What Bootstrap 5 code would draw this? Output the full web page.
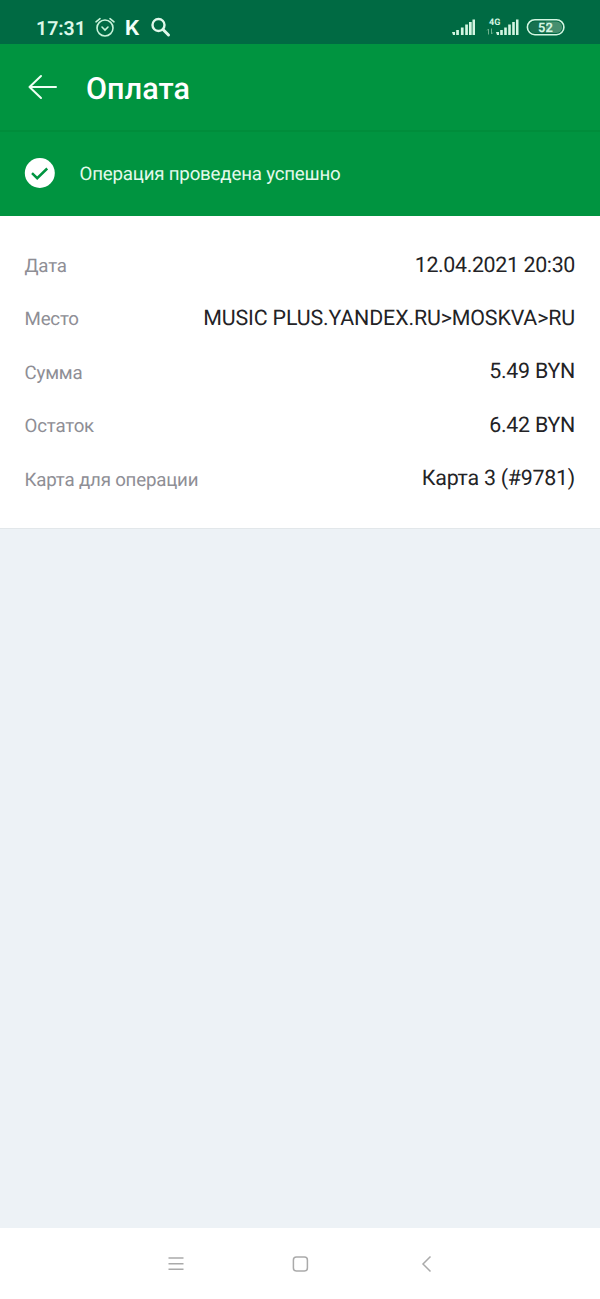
<!DOCTYPE html>
<html lang="ru">
<head>
<meta charset="utf-8">
<meta name="viewport" content="width=device-width, initial-scale=1">
<title>Оплата</title>
<link href="https://cdn.jsdelivr.net/npm/bootstrap@5.3.0/dist/css/bootstrap.min.css" rel="stylesheet">
<style>
body{font-family:Roboto,"Noto Sans",sans-serif;background:#edf2f6;height:1299px;overflow:hidden;text-rendering:geometricPrecision}
svg{display:block;flex:none}
.status{height:44px;background:#006a43;color:#dcf8e8;padding:11px 35px 0 36px}
.clock{font-size:19.5px;font-weight:600;line-height:35px;width:58px;height:33px}
.k-app{font:700 20.5px/34px Inter,sans-serif;width:26px;color:#f2fff8}
.app-title{height:88px;background:#009440;border-bottom:2px solid #008d3b;color:#fff;padding-left:27px}
.app-title h1{font-size:30.5px;font-weight:500;line-height:36px;margin:6px 0 0 28px;letter-spacing:.1px}
.result{height:84px;background:#009440;color:#e4faec;padding-left:24px;font-size:18.7px;letter-spacing:-.19px}
.result-text{margin-left:23.5px}
.details{height:313px;background:#fff;border-bottom:1px solid #e2e7ea;padding:23.5px 25px 0 24.5px}
.detail-row{height:53.35px}
.detail-row dt{font-size:18.7px;font-weight:400;color:#8e8e95;letter-spacing:-.19px}
.detail-row dd{font-size:21.4px;color:#232326;margin-top:-1px;letter-spacing:-.25px}
.detail-row .stamp{letter-spacing:-.36px}
.detail-row .place{letter-spacing:-.14px}
.sysnav{height:71px;background:#fff}
</style>
</head>
<body class="d-flex flex-column">
<header>
  <div class="status d-flex align-items-start justify-content-between">
    <div class="d-flex">
      <span class="clock">17:31</span>
      <svg width="31" height="33" viewBox="0 0 31 33" fill="none" stroke="#c8f4da" stroke-width="1.6" stroke-linecap="round"><circle cx="11" cy="17" r="8"/><path d="M2 10.8 6 7.7M20 10.8 16 7.7M8 16l3 3 3-3"/></svg>
      <span class="k-app">K</span>
      <svg width="22" height="33" viewBox="0 0 22 33" fill="none" stroke="#e0f8ea" stroke-width="2.4" stroke-linecap="round"><circle cx="7.5" cy="14" r="6"/><path d="m12 18.5 5.5 5.5" stroke-width="3"/></svg>
    </div>
    <svg width="114" height="33" viewBox="0 0 114 33" fill="#d3f6e2">
      <path d="M1 21h3v3H2zM5.2 19h2.7v5H5.2zM9.9 16.5h2.7V24H9.9zM14.2 13.5h2.7V24h-2.7zM18 11h2.7v13H18zM21.5 8.5H24V24h-2.5z"/>
      <path d="M45 21h3v3h-2zM49.2 19h2.6v5h-2.6zM53.2 16.5h2.6V24h-2.6zM57.2 13.5h2.6V24h-2.6zM61.2 11h2.6v13h-2.6zM65 8.5h2.5V24H65z"/>
      <text x="38" y="13.7" font-family="Roboto,sans-serif" font-size="9" font-weight="700">4G</text>
      <path d="M37.5 23.5V18l-1.3 1.4M40.5 17.5V23l1.3-1.4" fill="none" stroke="#6db18d" stroke-width="1"/>
      <rect x="76.4" y="8.7" width="36.5" height="15" rx="7.5" fill="none" stroke="#d3f6e2" stroke-width="1.6"/>
      <path d="M95 10.5h10.5a5.7 5.7 0 0 1 0 11.4H95z" fill="#468f6f"/>
      <path d="M84 10.5h11v11.4H84a5.7 5.7 0 0 1 0-11.4z" fill="#187150"/>
      <text x="94.5" y="20.7" text-anchor="middle" font-family="Roboto,sans-serif" font-size="13" font-weight="700">52</text>
    </svg>
  </div>
  <div class="app-title d-flex align-items-center">
    <svg width="31" height="28" viewBox="0 0 31 28" fill="none" stroke="#effff4" stroke-width="2" stroke-linecap="round" stroke-linejoin="round"><path d="M29 14H2.5M14 3 2.5 14 14 25"/></svg>
    <h1>Оплата</h1>
  </div>
  <div class="result d-flex align-items-center">
    <svg width="32" height="32" viewBox="0 0 32 32"><circle cx="15.8" cy="15" r="15" fill="#fff"/><path d="m8 15.2 5.2 5L23.2 10.5" fill="none" stroke="#009440" stroke-width="2.5"/></svg>
    <span class="result-text">Операция проведена успешно</span>
  </div>
</header>
<main class="flex-grow-1">
  <dl class="details mb-0">
    <div class="detail-row d-flex align-items-center justify-content-between"><dt>Дата</dt><dd class="mb-0 stamp">12.04.2021 20:30</dd></div>
    <div class="detail-row d-flex align-items-center justify-content-between"><dt>Место</dt><dd class="mb-0 place">MUSIC PLUS.YANDEX.RU&gt;MOSKVA&gt;RU</dd></div>
    <div class="detail-row d-flex align-items-center justify-content-between"><dt>Сумма</dt><dd class="mb-0">5.49 BYN</dd></div>
    <div class="detail-row d-flex align-items-center justify-content-between"><dt>Остаток</dt><dd class="mb-0">6.42 BYN</dd></div>
    <div class="detail-row d-flex align-items-center justify-content-between"><dt>Карта для операции</dt><dd class="mb-0">Карта 3 (#9781)</dd></div>
  </dl>
</main>
<nav class="sysnav">
  <svg width="600" height="71" viewBox="0 0 600 71" fill="none" stroke="#aaa" stroke-width="1.5"><path d="M168.5 30h15M168.5 35.7h15M168.5 41.3h15"/><rect x="293.4" y="28.9" width="14" height="14" rx="3"/><path d="M430.5 28.5 423 36l7.5 7.5"/></svg>
</nav>
<script src="https://cdn.jsdelivr.net/npm/bootstrap@5.3.0/dist/js/bootstrap.bundle.min.js"></script>
</body>
</html>
